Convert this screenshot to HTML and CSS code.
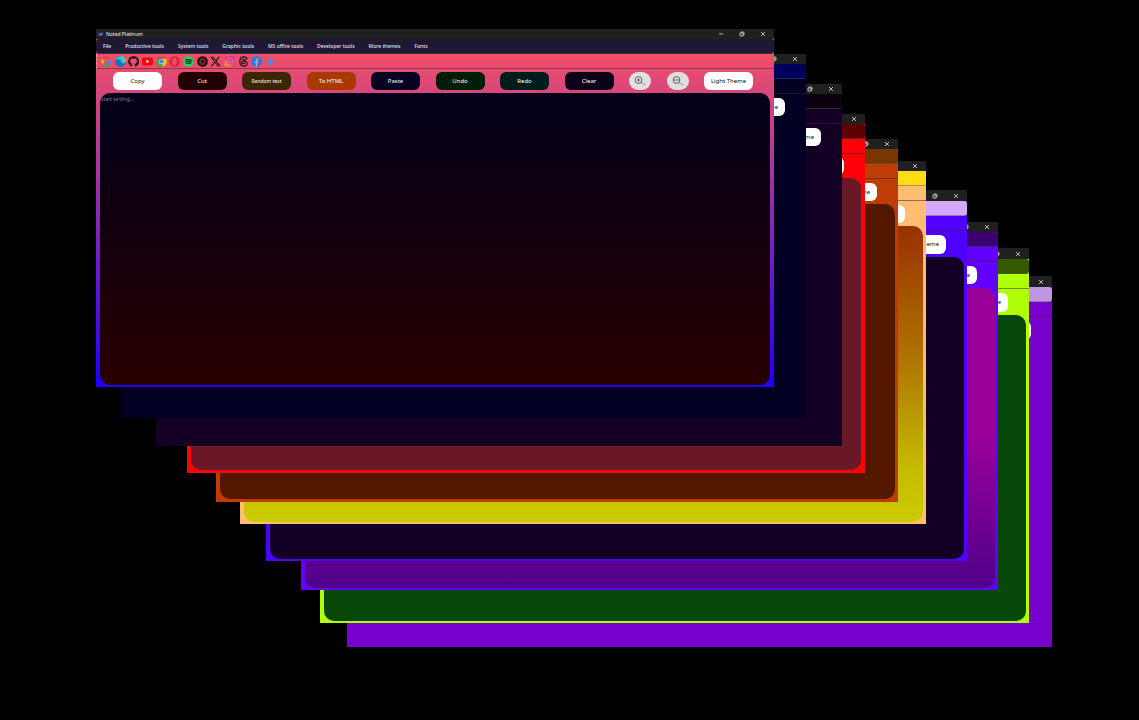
FILE: index.html
```html
<!DOCTYPE html>
<html lang="en">
<head>
<meta charset="utf-8">
<title>Noted Platinum</title>
<link rel="stylesheet" href="styles.css">
</head>
<body>
<svg class="defs" aria-hidden="true">
  <symbol id="min" viewBox="0 0 6 6"><path d="M1 3h4" stroke="currentColor" stroke-width=".7"/></symbol>
  <symbol id="restore" viewBox="0 0 6 6"><path d="M1 2h3v3h-3zM2 1.8V1h2.2q.8 0 .8.8V4H4.2" fill="none" stroke="currentColor" stroke-width=".7"/></symbol>
  <symbol id="close" viewBox="0 0 6 6"><path d="M1 1l4 4M5 1L1 5" stroke="currentColor" stroke-width=".7"/></symbol>
</svg>
<main class="desktop">
  <section class="window tall w10">
    <header class="titlebar"><div class="controls"><button aria-label="Close"><svg><use href="#close"/></svg></button></div></header>
    <div class="menubar"></div><div class="toolbar"></div>
    <div class="actions end"><button class="action light">Light Theme</button></div>
    <textarea class="editor" aria-label="Note"></textarea>
  </section>
  <section class="window tall w9">
    <header class="titlebar"><div class="controls"><button aria-label="Restore"><svg><use href="#restore"/></svg></button><button aria-label="Close"><svg><use href="#close"/></svg></button></div></header>
    <div class="menubar"></div><div class="toolbar"></div>
    <div class="actions end"><button class="action light">Light Theme</button></div>
    <textarea class="editor" aria-label="Note"></textarea>
  </section>
  <section class="window w8">
    <header class="titlebar"><div class="controls"><button aria-label="Restore"><svg><use href="#restore"/></svg></button><button aria-label="Close"><svg><use href="#close"/></svg></button></div></header>
    <div class="menubar"></div><div class="toolbar"></div>
    <div class="actions end"><button class="action light">Light Theme</button></div>
    <textarea class="editor" aria-label="Note"></textarea>
  </section>
  <section class="window tall w7">
    <header class="titlebar"><div class="controls"><button aria-label="Restore"><svg><use href="#restore"/></svg></button><button aria-label="Close"><svg><use href="#close"/></svg></button></div></header>
    <div class="menubar"></div><div class="toolbar"></div>
    <div class="actions end"><button class="action light">Light Theme</button></div>
    <textarea class="editor" aria-label="Note"></textarea>
  </section>
  <section class="window w6">
    <header class="titlebar"><div class="controls"><button aria-label="Close"><svg><use href="#close"/></svg></button></div></header>
    <div class="menubar"></div><div class="toolbar"></div>
    <div class="actions end"><button class="action light">Light Theme</button></div>
    <textarea class="editor" aria-label="Note"></textarea>
  </section>
  <section class="window w5">
    <header class="titlebar"><div class="controls"><button aria-label="Restore"><svg><use href="#restore"/></svg></button><button aria-label="Close"><svg><use href="#close"/></svg></button></div></header>
    <div class="menubar"></div><div class="toolbar"></div>
    <div class="actions end"><button class="action light">Light Theme</button></div>
    <textarea class="editor" aria-label="Note"></textarea>
  </section>
  <section class="window w4">
    <header class="titlebar"><div class="controls"><button aria-label="Close"><svg><use href="#close"/></svg></button></div></header>
    <div class="menubar"></div><div class="toolbar"></div>
    <div class="actions end"><button class="action light">Light Theme</button></div>
    <textarea class="editor" aria-label="Note"></textarea>
  </section>
  <section class="window w3">
    <header class="titlebar"><div class="controls"><button aria-label="Restore"><svg><use href="#restore"/></svg></button><button aria-label="Close"><svg><use href="#close"/></svg></button></div></header>
    <div class="menubar"></div><div class="toolbar"></div>
    <div class="actions end"><button class="action light">Light Theme</button></div>
    <textarea class="editor" aria-label="Note"></textarea>
  </section>
  <section class="window w2">
    <header class="titlebar"><div class="controls"><button aria-label="Restore"><svg><use href="#restore"/></svg></button><button aria-label="Close"><svg><use href="#close"/></svg></button></div></header>
    <div class="menubar"></div><div class="toolbar"></div>
    <div class="actions end"><button class="action light">Light Theme</button></div>
    <textarea class="editor" aria-label="Note"></textarea>
  </section>

  <section class="window w1">
    <header class="titlebar">
      <svg class="app-icon" viewBox="0 0 6 6"><path d="M1 5L1.8 1L3.4 4.2L5 .8L4.6 4.6" fill="none" stroke="#6a6cf8" stroke-width="1.2"/></svg>
      <h1 class="title">Noted Platinum</h1>
      <div class="controls">
        <button aria-label="Minimize"><svg><use href="#min"/></svg></button>
        <button aria-label="Restore"><svg><use href="#restore"/></svg></button>
        <button aria-label="Close"><svg><use href="#close"/></svg></button>
      </div>
    </header>
    <nav class="menubar">
      <button>File</button><button>Productive tools</button><button>System tools</button><button>Graphic tools</button><button>MS office tools</button><button>Developer tools</button><button>More themes</button><button>Fonts</button>
    </nav>
    <div class="toolbar">
      <div class="apps">
        <button aria-label="Google"><svg viewBox="0 0 24 24" fill="none" stroke-width="4.6"><path d="M19 6A9 9 0 0 0 4.500 7.500" stroke="#ea4335"/><path d="M4.500 7.500A9 9 0 0 0 4.500 16.500" stroke="#fbbc05"/><path d="M4.500 16.500A9 9 0 0 0 18 18.700" stroke="#34a853"/><path d="M18 18.700A9 9 0 0 0 21 12H12" stroke="#4285f4"/></svg></button>
        <button aria-label="Edge"><svg viewBox="0 0 24 24"><circle cx="12" cy="12" r="11.500" fill="#0b6fc4"/><path d="M1 11C2 4 7 .5 12.500.5 19 .5 23.500 5 23.500 10c0 4-3 6-6.500 6-3 0-4-1.500-3-3C14 8 5 5 1 11Z" fill="#35c1c9"/><path d="M12.500.5C19 .5 23.500 5 23.500 10c0 4-3 6-6.500 6 4-7 2-11-4.500-15.500Z" fill="#55d87b"/><path d="M10 11c-3 4 1 10 9 8l3-1c-3 2-7 2-10 0-3-2-4-4-2-7Z" fill="#f3607a"/></svg></button>
        <button aria-label="GitHub"><svg viewBox="0 0 24 24"><path d="M12 .5A11.500 11.500 0 0 0 8.400 22.900c.6.100.8-.2.800-.6v-2.200c-3.200.7-3.900-1.400-3.900-1.400-.5-1.300-1.300-1.700-1.300-1.700-1-.7.100-.7.100-.7 1.200.1 1.800 1.200 1.800 1.200 1 1.800 2.700 1.300 3.400 1 .1-.8.4-1.300.7-1.600-2.600-.3-5.300-1.300-5.300-5.700 0-1.300.5-2.300 1.200-3.100-.1-.3-.5-1.500.1-3.100 0 0 1-.3 3.200 1.200a11 11 0 0 1 5.800 0C17.200 4.700 18.200 5 18.200 5c.6 1.600.2 2.800.1 3.100.7.8 1.200 1.800 1.200 3.100 0 4.400-2.700 5.400-5.300 5.700.4.400.8 1.100.8 2.100v3.300c0 .4.200.7.800.6A11.500 11.500 0 0 0 12 .5Z" fill="#15101a"/></svg></button>
        <button aria-label="YouTube"><svg viewBox="0 0 24 24"><rect x="0" y="3.500" width="24" height="17" rx="4" fill="#f00"/><path d="M9.500 8.200v7.600L16 12Z" fill="#fff"/></svg></button>
        <button aria-label="Chrome"><svg viewBox="0 0 24 24"><circle cx="12" cy="12" r="11.500" fill="#34a853"/><path d="M12 12L2 6.200A11.500 11.500 0 0 1 22 6.200H12Z" fill="#ea4335"/><path d="M22 6.200A11.500 11.500 0 0 1 12 23.500L17 14 15 6.200Z" fill="#fbbc05"/><circle cx="12" cy="12" r="5.600" fill="#fff"/><circle cx="12" cy="12" r="5" fill="#4285f4"/></svg></button>
        <button aria-label="Opera"><svg viewBox="0 0 24 24"><path fill-rule="evenodd" d="M12 .5a11.500 11.500 0 1 0 0 23 11.500 11.500 0 0 0 0-23ZM12 4c3 0 5 3.500 5 8s-2 8-5 8-5-3.500-5-8 2-8 5-8Z" fill="#f01e32"/><path d="M14 3.500c3 1 5 4 5 8.500s-2 7.500-5 8.500c4 1 8-3 8-8.500s-4-9.500-8-8.500Z" fill="#d9203c"/></svg></button>
        <button aria-label="Spotify"><svg viewBox="0 0 24 24"><circle cx="12" cy="12" r="11.500" fill="#1ed760"/><path d="M5 8.500c5-1.500 10-1 14.500 1.200M6 12.300c4-1.200 8-.8 12 1.200M6.800 15.900c3.500-1 6.500-.6 9.500 1" fill="none" stroke="#101c14" stroke-width="2.200" stroke-linecap="round"/></svg></button>
        <button aria-label="ChatGPT"><svg viewBox="0 0 24 24"><circle cx="12" cy="12" r="11.500" fill="#17070c"/><g fill="none" stroke="#8c3640" stroke-width="1.400"><ellipse cx="12" cy="12" rx="7.500" ry="4"/><ellipse cx="12" cy="12" rx="7.500" ry="4" transform="rotate(60 12 12)"/><ellipse cx="12" cy="12" rx="7.500" ry="4" transform="rotate(120 12 12)"/></g></svg></button>
        <button aria-label="X"><svg viewBox="0 0 24 24"><path fill-rule="evenodd" d="M.8 1.500h7l5.200 7L19.200 1.500h3L14.400 10.500 23.500 22.500h-7l-5.700-7.600-6.500 7.600h-3l8.100-9.500ZM4.800 3.500l12.800 17h2L6.900 3.500Z" fill="#140c12"/></svg></button>
        <button aria-label="Instagram"><svg viewBox="0 0 24 24"><defs><linearGradient id="ig" x1="0" y1="1" x2=".8" y2="0"><stop offset="0" stop-color="#ffb04a"/><stop offset=".45" stop-color="#f0415a"/><stop offset="1" stop-color="#a63bd0"/></linearGradient></defs><rect x=".5" y=".5" width="23" height="23" rx="6" fill="url(#ig)"/><g fill="none" stroke="#f58a96" stroke-width="1.400"><rect x="4.500" y="4.500" width="15" height="15" rx="4"/><circle cx="12" cy="12" r="3.700"/></g></svg></button>
        <button aria-label="Threads"><svg viewBox="0 0 24 24"><path d="M20 8C19 3.500 16.500 2 12.500 2 6.500 2 4 5.500 4 12s2.500 10 8.500 10c5 0 7.500-2.500 7.500-5.500 0-4-4-5.500-8-5.200-3 .2-4.200 1.700-4 3.200.3 3.500 7.500 3.500 8-1.500C16.500 8.500 14 7 12 7c-1.700 0-2.900.6-3.500 1.800" fill="none" stroke="#150d14" stroke-width="2.400"/></svg></button>
        <button aria-label="Facebook"><svg viewBox="0 0 24 24"><circle cx="12" cy="12" r="11.500" fill="#0b84f5"/><path d="M10.500 23.500V15H8v-3h2.500V9.500c0-3 1.500-4.500 4-4.500l2.200.2v2.600h-1.300c-1.300 0-1.700.8-1.700 1.600V12h2.900l-.5 3h-2.400v8.500Z" fill="#ee8fa8"/></svg></button>
        <button aria-label="Gemini"><svg viewBox="0 0 24 24"><path d="M12 1c1.500 6.500 4.500 9.500 11 11-6.500 1.500-9.500 4.500-11 11-1.500-6.500-4.500-9.500-11-11 6.500-1.500 9.500-4.500 11-11Z" fill="#4a8ae0"/></svg></button>
      </div>
    </div>
    <div class="actions">
      <button class="action light">Copy</button>
      <button class="action cut">Cut</button>
      <button class="action random">Random text</button>
      <button class="action html">To HTML</button>
      <button class="action paste">Paste</button>
      <button class="action undo">Undo</button>
      <button class="action redo">Redo</button>
      <button class="action clear">Clear</button>
      <button class="zoom" aria-label="Zoom in"><svg viewBox="0 0 12 10"><circle cx="4.500" cy="4" r="3.400"/><path d="M3 4h3M4.500 2.500v3"/><path class="handle" d="M7 6.500L11.500 9"/></svg></button>
      <button class="zoom" aria-label="Zoom out"><svg viewBox="0 0 12 10"><circle cx="4.500" cy="4" r="3.400"/><path d="M2 4h5"/><path class="handle" d="M7 6.500L11.500 9"/></svg></button>
      <button class="action light">Light Theme</button>
    </div>
    <textarea class="editor" aria-label="Note" placeholder="start writing..."></textarea>
  </section>
</main>
</body>
</html>
```
FILE: styles.css
```css
* { box-sizing: border-box; }

body {
  margin: 0;
  background: #000;
  font-family: "Noto Sans", "Open Sans", sans-serif;
}

button {
  border: 0;
  padding: 0;
  background: none;
  color: inherit;
  font: inherit;
}

.defs { position: absolute; width: 0; height: 0; }

.desktop {
  position: relative;
  min-height: 100vh;
  overflow: hidden;
}

/* Windows are cascaded over the desktop */
.window {
  position: absolute;
  display: flex;
  flex-direction: column;
  background: var(--body);
}

.w1 { left: 96px; top: 29px; width: 678px; height: 358px; --body: linear-gradient(#ff5558, #d8467c 18%, #2000ff 98%); --menu: #1f1835; --editor: linear-gradient(#01001a, #100010 40%, #280000); }
.w2 { left: 121px; top: 54px; width: 685px; height: 364px; --body: #020022; --menu: #00005c; --editor: #020022; }
.w3 { left: 156px; top: 84px; width: 686px; height: 362px; --body: #130024; --menu: #0a0010; --editor: #130024; }
.w4 { left: 187px; top: 114px; width: 678px; height: 359px; --body: #ff0008; --menu: #5c0000; --editor: #6a1826; }
.w5 { left: 216px; top: 139px; width: 682px; height: 363px; --body: #be3c05; --menu: #7a3600; --editor: #521900; }
.w6 { left: 240px; top: 161px; width: 686px; height: 363px; --body: #ffbd72; --menu: #ffdc18; --editor: linear-gradient(#993000, #b07c00 49%, #c4b800 80%, #cccb00); }
.w7 { left: 266px; top: 190px; width: 701px; height: 371px; --body: #5000ff; --menu: #d4a8ff; --editor: #130024; }
.w8 { left: 301px; top: 222px; width: 697px; height: 368px; --body: #6200ff; --menu: #3c0072; --editor: linear-gradient(#9b0099 48%, #50008c); }
.w9 { left: 320px; top: 248px; width: 709px; height: 375px; --body: #b0ff08; --menu: #355900; --editor: #084808; }
.w10 { left: 347px; top: 276px; width: 705px; height: 371px; --body: #7800cc; --menu: #c096e2; --editor: #7800cc; }

.titlebar {
  display: flex;
  align-items: center;
  height: 10px;
  padding: 0 8px 0 2px;
  background: #202020;
  color: #f4f4f4;
}

.tall .titlebar { height: 11px; }

.app-icon { width: 5px; height: 5px; }

.title {
  margin: 0 0 0 3px;
  font-size: 5px;
  line-height: 8px;
  font-weight: 400;
}

.controls {
  display: flex;
  gap: 15px;
  margin-left: auto;
}

.controls button { display: flex; }
.controls svg { width: 6px; height: 6px; }

.menubar {
  display: flex;
  align-items: center;
  gap: 14px;
  height: 15px;
  padding: 0 7px;
  border-bottom: 1px solid rgb(80 80 80 / 50%);
  border-radius: 3px;
  background: var(--menu);
  color: #e4e2ec;
  font-size: 5px;
  line-height: 8px;
  font-weight: 500;
}

.toolbar {
  display: flex;
  align-items: center;
  height: 15px;
  padding-left: 4px;
  border-bottom: 1px solid rgb(64 40 50 / 55%);
}

.w1 .toolbar { border-left: 1px dashed rgb(255 190 190 / 60%); }

.apps {
  display: flex;
  justify-content: space-between;
  width: 26%;
}

.apps button { display: flex; }
.apps svg { width: 11px; height: 11px; }

.actions {
  display: flex;
  align-items: center;
  justify-content: space-between;
  height: 25px;
  padding: 0 21px 0 17px;
}

.actions.end { justify-content: flex-end; }
.w1 .actions, .w4 .actions { height: 24px; }
.tall .actions, .w8 .actions { height: 26px; }

.action {
  width: 49px;
  height: 18px;
  border-radius: 6px;
  color: #fff;
  font-size: 6px;
  line-height: 8px;
  font-weight: 400;
}

.tall .action { height: 19px; }

.light { background: #fff; color: #101010; }
.cut { background: #220003; }
.random { background: #3a2602; font-size: 5px; }
.html { background: #a83a00; }
.paste { background: #070020; }
.undo { background: #001d05; }
.redo { background: #001c1c; }
.clear { background: #0d0019; }

.zoom {
  display: flex;
  align-items: center;
  justify-content: center;
  width: 22px;
  height: 18px;
  border-radius: 9px;
  background: #dfdfdf;
}

.zoom svg {
  width: 12px;
  height: 10px;
  fill: none;
  stroke: #444;
  stroke-width: .8;
}

.zoom .handle { stroke-width: .5; }

.editor {
  flex: 1;
  min-height: 0;
  margin: 0 4px 2px;
  padding: 2px 1px;
  border: 0;
  border-radius: 10px;
  outline: 0;
  resize: none;
  overflow: hidden;
  background: var(--editor);
  color: #fff;
  font: 5px/8px "Noto Sans", "Open Sans", sans-serif;
}

.editor::placeholder { color: #85838b; }

.w5 .editor, .w6 .editor, .w8 .editor, .tall .editor { margin-right: 3px; }
.w4 .editor, .w5 .editor { margin-bottom: 3px; }
```
